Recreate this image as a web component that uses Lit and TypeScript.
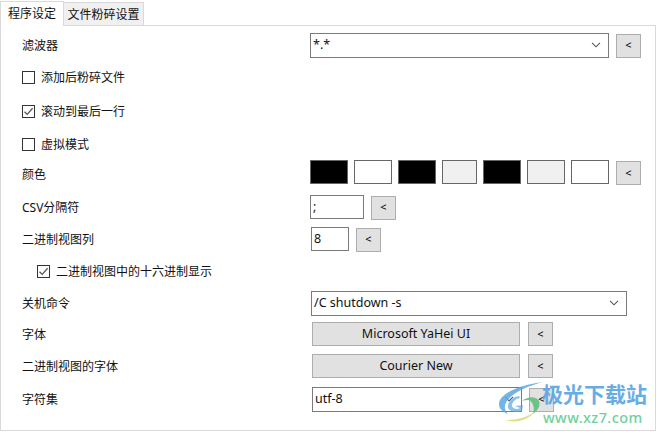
import { LitElement, html, css, svg } from "lit";
import { customElement } from "lit/decorators.js";

const chevron = html`<svg class="chev" width="10" height="6" viewBox="0 0 10 6"><path d="M1 .8 5 4.8 9 .8" fill="none" stroke="#555" stroke-width="1.1"/></svg>`;
const check = html`<svg width="11" height="11" viewBox="0 0 11 11"><path d="M1.5 5.8 4.2 8.4 9.6 2.2" fill="none" stroke="#555" stroke-width="1.3"/></svg>`;

@customElement("app-root")
export class AppRoot extends LitElement {
  static styles = css`
    :host { display: block; width: 658px; height: 432px; background: #fff; position: relative; overflow: hidden;
      font: 12px "Noto Sans", "Noto Sans CJK SC", sans-serif; color: #111; }
    .tabs { display: flex; height: 25px; align-items: flex-end; }
    .tab { box-sizing: border-box; display: flex; align-items: center; justify-content: center; border: 1px solid #d9d9d9; border-bottom: 0; }
    .tab.on { width: 64px; height: 25px; background: #fff; margin-bottom: -1px; position: relative; z-index: 1; padding-bottom: 2px; }
    .tab.off { width: 81px; height: 23px; background: #f0f0f0; margin-left: -1px; }
    .panel { box-sizing: border-box; width: 656px; height: 406px; border: 1px solid #d9d9d9; padding: 3px 0 0 21px; }
    .form { display: grid; grid-template-columns: 288px 340px;
      grid-template-rows: 32px 32px 36px 30px 30px 36px 28px 36px 28px 34px 30px 36px; align-items: center; }
    .wide { grid-column: 1 / 3; }
    .check { display: flex; align-items: center; gap: 6px; }
    .check.sub { margin-left: 15px; }
    .box { box-sizing: border-box; width: 13px; height: 13px; border: 1px solid #333; display: flex; align-items: center; justify-content: center; background: #fff; }
    .line { display: flex; align-items: flex-start; }
    .center { align-items: center; }
    .select { box-sizing: border-box; height: 25px; border: 1px solid #7a7a7a; background: #fff; display: flex; align-items: center; padding: 0 7px 1px 2px; justify-content: space-between; font-size: 12.5px; }
    .input { box-sizing: border-box; height: 24px; border: 1px solid #7a7a7a; background: #fff; display: flex; align-items: center; padding-left: 2px; font-size: 12.5px; }
    .btn { box-sizing: border-box; height: 24px; background: #e1e1e1; border: 1px solid #adadad; display: flex; align-items: center; justify-content: center; font-size: 12.5px; padding-bottom: 2px; }
    .lt { width: 25px; font-size: 11px; margin-top: 1px; color: #000; }
    .center .lt { margin-top: 0; }
    .sw { box-sizing: border-box; width: 38px; height: 24px; border: 1px solid #666; margin-right: 6px; }
    .sw.n { width: 35px; }
    .sw.end { margin-right: 7px; }
    .k { background: #000; } .w { background: #fff; } .g { background: #f0f0f0; }
    .colors { margin-bottom: 3px; }
    .ml1 { margin-left: 1px; } .ml2 { margin-left: 2px; }
    .mr7 { margin-right: 7px; } .mr8 { margin-right: 8px; }
    .w299 { width: 299px; } .w54 { width: 54px; } .w38 { width: 38px; } .w316 { width: 316px; } .w208 { width: 208px; } .w210 { width: 210px; }
    .watermark { position: absolute; left: 498px; top: 381px; width: 160px; height: 46px; pointer-events: none; }
    .watermark svg { position: absolute; left: 0; top: 0; }
    .wm1 { position: absolute; left: 44px; top: -2px; font: 700 21px/28px "Noto Sans CJK SC", sans-serif; color: #5ba7e3; white-space: nowrap; opacity: .92; }
    .wm2 { position: absolute; left: 45px; top: 27px; font: 500 14.5px/18px "Noto Sans", sans-serif; color: #72cf9c; white-space: nowrap; letter-spacing: .4px; }
  `;

  private lt() { return html`<div class="btn lt">&lt;</div>`; }

  render() {
    return html`
      <div class="tabs">
        <div class="tab on">程序设定</div>
        <div class="tab off">文件粉碎设置</div>
      </div>
      <div class="panel">
        <div class="form">
          <div>滤波器</div>
          <div class="line">
            <div class="select w299 mr7"><span>*.*</span>${chevron}</div>${this.lt()}
          </div>
          <div class="check wide"><span class="box"></span>添加后粉碎文件</div>
          <div class="check wide"><span class="box">${check}</span>滚动到最后一行</div>
          <div class="check wide"><span class="box"></span>虚拟模式</div>
          <div>颜色</div>
          <div class="line colors">
            <div class="sw k"></div><div class="sw w"></div><div class="sw k"></div><div class="sw g n"></div>
            <div class="sw k"></div><div class="sw g"></div><div class="sw w end"></div>${this.lt()}
          </div>
          <div>CSV分隔符</div>
          <div class="line">
            <div class="input w54 mr7">;</div>${this.lt()}
          </div>
          <div>二进制视图列</div>
          <div class="line ml1">
            <div class="input w38 mr7">8</div>${this.lt()}
          </div>
          <div class="check wide sub"><span class="box">${check}</span>二进制视图中的十六进制显示</div>
          <div>关机命令</div>
          <div class="line ml1"><div class="select w316">/C shutdown -s ${chevron}</div></div>
          <div>字体</div>
          <div class="line ml2 center">
            <div class="btn w208 mr8">Microsoft YaHei UI</div>${this.lt()}
          </div>
          <div>二进制视图的字体</div>
          <div class="line ml2 center">
            <div class="btn w208 mr8">Courier New</div>${this.lt()}
          </div>
          <div>字符集</div>
          <div class="line ml2">
            <div class="select w210 mr7">utf-8 ${chevron}</div>${this.lt()}
          </div>
        </div>
      </div>
      <div class="watermark">
        <svg width="48" height="46" viewBox="0 0 48 46">
          ${svg`<path d="M45 1 C28 3 8 9 2 19 C-1 25 3 31 10 33 C6 29 6 24 9 20 C15 11 30 5 45 1Z" fill="#5ba7e3" opacity=".85"/>
          <path d="M10 27 C9 21 14 16 21 15 L22 17 C17 18 14 21 14 25 C15 28 19 29 22 27 L17 25 L25 24 L24 30 C19 32 12 31 10 27Z" fill="#5ba7e3" opacity=".7"/>
          <path d="M24 20 C30 15 38 15 41 20 C43 25 39 30 35 33 C37 27 35 21 31 19 C29 19 26 19 24 20Z" fill="#5fc07c" opacity=".9"/>
          <path d="M8 39 C18 39 28 37 36 31 C32 38 18 43 8 39Z" fill="#d9dc73" opacity=".9"/>`}
        </svg>
        <div class="wm1">极光下载站</div>
        <div class="wm2">www.xz7.com</div>
      </div>
    `;
  }
}
